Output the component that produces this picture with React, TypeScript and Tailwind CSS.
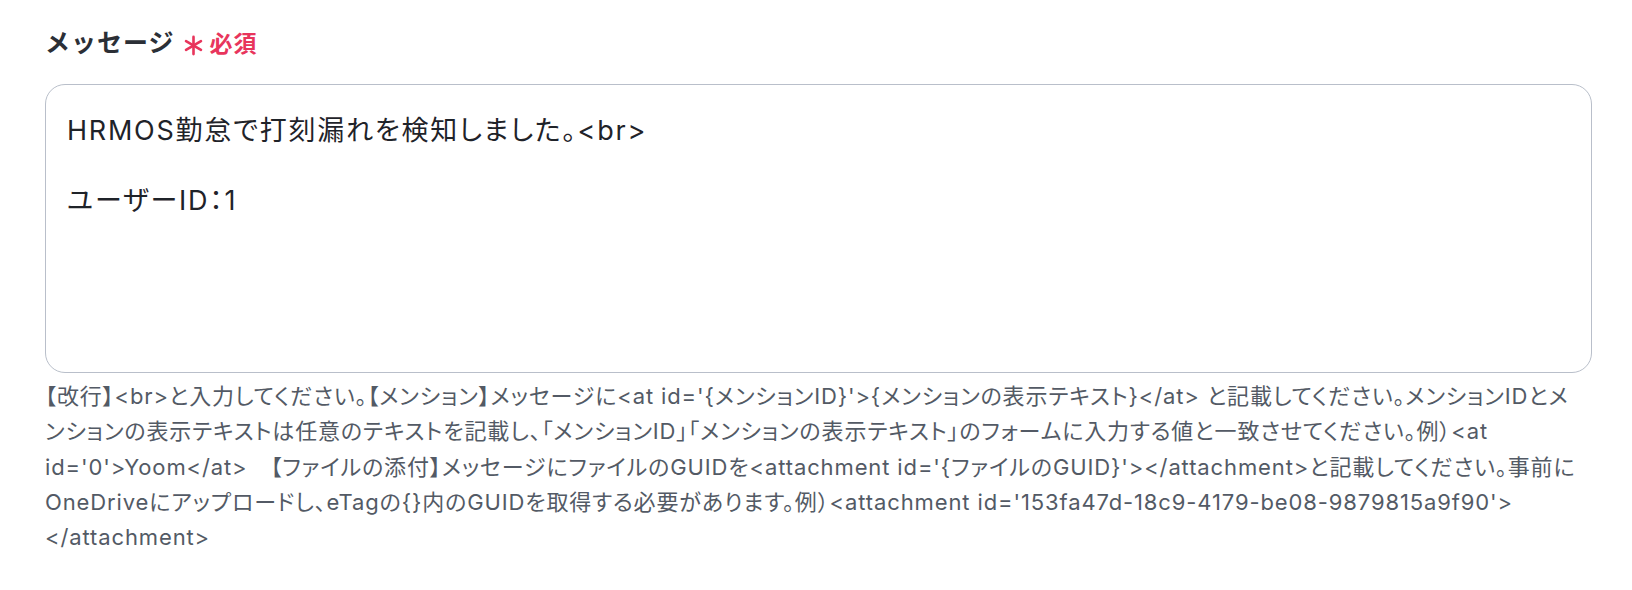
import React from "react";

const helpLines = [
  "【改行】<br>と入力してください。【メンション】メッセージに<at id='{メンションID}'>{メンションの表示テキスト}</at> と記載してください。メンションIDとメ",
  "ンションの表示テキストは任意のテキストを記載し、「メンションID」「メンションの表示テキスト」のフォームに入力する値と一致させてください。例）<at",
  "id='0'>Yoom</at>　【ファイルの添付】メッセージにファイルのGUIDを<attachment id='{ファイルのGUID}'></attachment>と記載してください。事前に",
  "OneDriveにアップロードし、eTagの{}内のGUIDを取得する必要があります。例）<attachment id='153fa47d-18c9-4179-be08-9879815a9f90'>",
  "</attachment>",
];

function RequiredMark() {
  return (
    <svg width="21" height="21" viewBox="0 0 20 20" className="shrink-0">
      <g stroke="#e8355c" strokeWidth="2.5" strokeLinecap="round">
        <line x1="10" y1="1.8" x2="10" y2="18.2" />
        <line x1="2.9" y1="5.9" x2="17.1" y2="14.1" />
        <line x1="2.9" y1="14.1" x2="17.1" y2="5.9" />
      </g>
    </svg>
  );
}

export default function App() {
  return (
    <div className="w-[1632px] h-[590px] bg-white pl-[45px] pt-[26px] font-['Inter','Noto_Sans_CJK_JP',sans-serif] overflow-hidden">
      <div className="flex items-center h-[36px]">
        <span className="text-[25px] font-semibold tracking-[0.04em] text-[#2b2f36]">メッセージ</span>
        <span className="ml-[8px] mt-[3px]">
          <RequiredMark />
        </span>
        <span className="ml-[6px] text-[23px] font-semibold tracking-[0.04em] text-[#e8355c]">必須</span>
      </div>
      <div className="mt-[22px] w-[1547px] h-[289px] border border-[#b9bfca] rounded-[20px] pl-[21px] pt-[28px] text-[27px] leading-[35px] tracking-[0.065em] text-[#1f2329] [font-feature-settings:'palt']">
        <p>HRMOS勤怠で打刻漏れを検知しました。&lt;br&gt;</p>
        <p>&nbsp;</p>
        <p>ユーザーID：1</p>
      </div>
      <div className="mt-[6px] text-[22px] leading-[35.3px] tracking-[0.04em] text-[#535a65] [font-feature-settings:'palt']">
        {helpLines.map((line, i) => (
          <div key={i} className="whitespace-nowrap">
            {line}
          </div>
        ))}
      </div>
    </div>
  );
}
